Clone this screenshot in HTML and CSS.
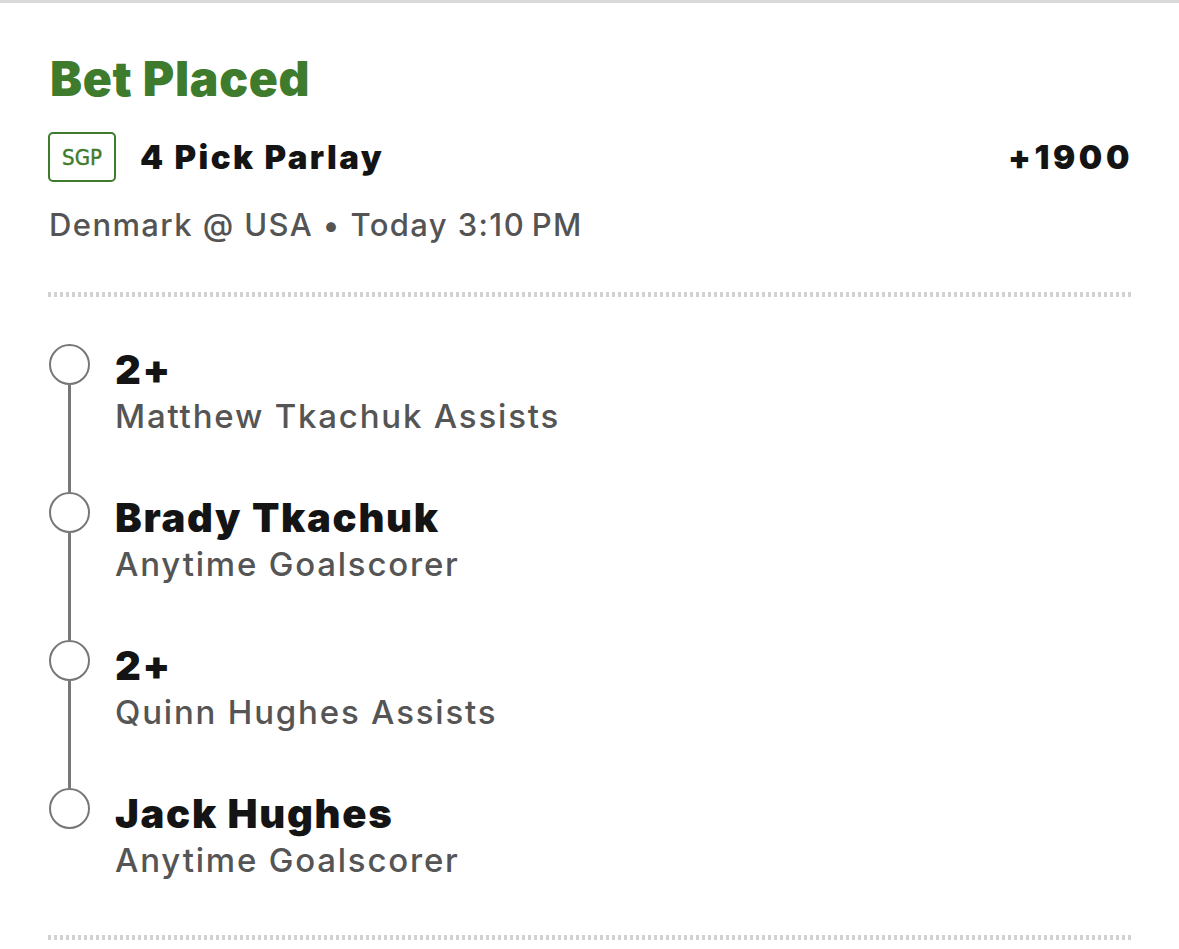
FILE: index.html
```html
<!DOCTYPE html>
<html lang="en">
<head>
<meta charset="utf-8">
<title>Bet Placed</title>
<link rel="stylesheet" href="styles.css">
</head>
<body>
<div class="topbar"></div>
<main class="card">
  <h1 class="status">Bet Placed</h1>
  <div class="bet-row">
    <span class="badge">SGP</span>
    <span class="bet-name">4 Pick Parlay</span>
    <span class="odds">+1900</span>
  </div>
  <div class="game">Denmark @ USA • Today 3:10&#8239;PM</div>
  <div class="divider top-div"></div>
  <ul class="legs">
    <li class="leg">
      <div class="rail"><span class="dot"></span><span class="line"></span></div>
      <div class="leg-text"><div class="leg-title">2+</div><div class="leg-sub">Matthew Tkachuk Assists</div></div>
    </li>
    <li class="leg">
      <div class="rail"><span class="dot"></span><span class="line"></span></div>
      <div class="leg-text"><div class="leg-title">Brady Tkachuk</div><div class="leg-sub">Anytime Goalscorer</div></div>
    </li>
    <li class="leg">
      <div class="rail"><span class="dot"></span><span class="line"></span></div>
      <div class="leg-text"><div class="leg-title">2+</div><div class="leg-sub">Quinn Hughes Assists</div></div>
    </li>
    <li class="leg last">
      <div class="rail"><span class="dot"></span></div>
      <div class="leg-text"><div class="leg-title">Jack Hughes</div><div class="leg-sub">Anytime Goalscorer</div></div>
    </li>
  </ul>
  <div class="divider bottom-div"></div>
</main>
</body>
</html>
```
FILE: styles.css
```css
* { box-sizing: border-box; }
html, body { margin: 0; padding: 0; background: #fff; }
body { font-family: Inter, "Noto Sans", "Liberation Sans", sans-serif; color: #141414; width: 1179px; height: 949px; overflow: hidden; }

.topbar { height: 3px; background: #d9d9d9; }

.card { padding: 0 48px 0 48px; }

.status {
  margin: 48px 0 0 2px;
  font-size: 48px;
  line-height: 56px;
  font-weight: 900;
  color: #3f7b2c;
  letter-spacing: 0.7px;
}

.bet-row {
  margin-top: 25px;
  height: 50px;
  display: flex;
  align-items: center;
}
.badge {
  width: 68px;
  height: 50px;
  border: 2.5px solid #3f7b2c;
  border-radius: 5px;
  color: #3f7b2c;
  display: flex;
  align-items: center;
  justify-content: center;
  font-family: "DejaVu Sans Condensed", "DejaVu Sans", sans-serif;
  font-stretch: condensed;
  font-size: 22px;
  font-weight: 400;
  letter-spacing: 0;
  padding-top: 1px;
  -webkit-text-stroke: 0.4px #3f7b2c;
}
.bet-name {
  margin-left: 24px;
  font-size: 33px;
  font-weight: 900;
  line-height: 40px;
  letter-spacing: 2.4px;
  flex: 1;
}
.odds {
  font-size: 33px;
  font-weight: 900;
  line-height: 40px;
  letter-spacing: 3.6px;
  margin-right: -2px;
}

.game {
  margin: 25px 0 0 1px;
  font-size: 31px;
  line-height: 36px;
  font-weight: 500;
  letter-spacing: 1.4px;
  color: #545454;
}

.divider {
  height: 5px;
  background: repeating-linear-gradient(to right, #d2d2d2 0 3px, transparent 3px 6px);
}
.top-div { margin-top: 49px; }
.bottom-div { margin-top: 55px; }

.legs { list-style: none; margin: 47px 0 0 0; padding: 0; }
.leg { display: flex; height: 148px; }
.leg.last { height: auto; }
.rail {
  width: 42px;
  display: flex;
  flex-direction: column;
  align-items: center;
}
.dot {
  width: 41px;
  height: 41px;
  border: 2.5px solid #777;
  border-radius: 50%;
  flex: none;
}
.line { width: 3px; flex: 1; background: #777; }
.leg-text { margin-left: 25px; padding-top: 3.5px; }
.leg-title {
  font-size: 40px;
  line-height: 44px;
  font-weight: 900;
  letter-spacing: 1.7px;
  color: #141414;
}
.leg-sub {
  margin-top: 4.5px;
  font-size: 33px;
  line-height: 40px;
  font-weight: 500;
  letter-spacing: 1.8px;
  color: #555;
}
```
